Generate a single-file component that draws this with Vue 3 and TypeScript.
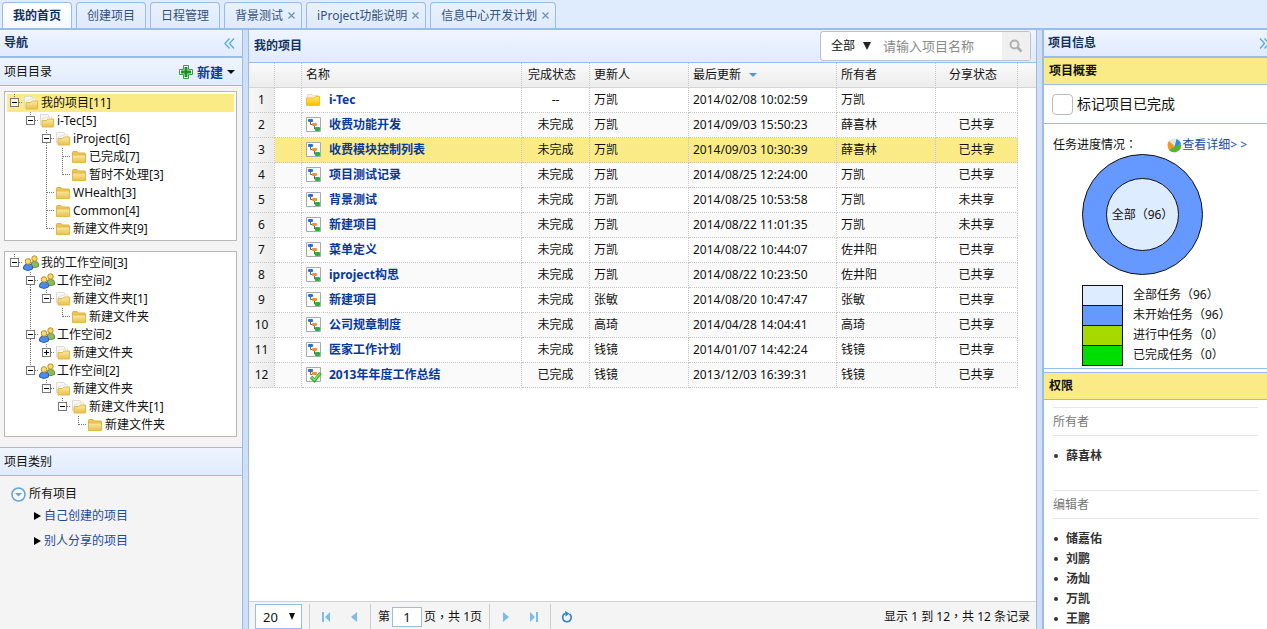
<script setup lang="ts">
import { computed, ref } from 'vue'

interface Tab { title: string; closable: boolean }
interface TreeNode { guides: string; icon: string; label: string }
interface Project { name: string; icon: string; state: string; updater: string; time: string; owner: string; share: string }

const tabs: Tab[] = [
  { title: '我的首页', closable: false },
  { title: '创建项目', closable: false },
  { title: '日程管理', closable: false },
  { title: '背景测试', closable: true },
  { title: 'iProject功能说明', closable: true },
  { title: '信息中心开发计划', closable: true },
]
const activeTab = ref(0)

// Guide characters: "." blank, "|" line, "T" branch, "L" last branch,
// "-" open node, "=" open node with siblings below, "+" closed node.
const projectTree: TreeNode[] = [
  { guides: '-', icon: 'folder-open', label: '我的项目[11]' },
  { guides: '.-', icon: 'folder-open', label: 'i-Tec[5]' },
  { guides: '..=', icon: 'folder-open', label: 'iProject[6]' },
  { guides: '..|T', icon: 'folder', label: '已完成[7]' },
  { guides: '..|L', icon: 'folder', label: '暂时不处理[3]' },
  { guides: '..T', icon: 'folder', label: 'WHealth[3]' },
  { guides: '..T', icon: 'folder', label: 'Common[4]' },
  { guides: '..L', icon: 'folder', label: '新建文件夹[9]' },
]
const workspaceTree: TreeNode[] = [
  { guides: '-', icon: 'people', label: '我的工作空间[3]' },
  { guides: '.=', icon: 'people', label: '工作空间2' },
  { guides: '.|-', icon: 'folder-open', label: '新建文件夹[1]' },
  { guides: '.|.L', icon: 'folder', label: '新建文件夹' },
  { guides: '.=', icon: 'people', label: '工作空间2' },
  { guides: '.|+', icon: 'folder-open', label: '新建文件夹' },
  { guides: '.-', icon: 'people', label: '工作空间[2]' },
  { guides: '..-', icon: 'folder-open', label: '新建文件夹' },
  { guides: '...-', icon: 'folder-open', label: '新建文件夹[1]' },
  { guides: '....L', icon: 'folder', label: '新建文件夹' },
]
const trees = [projectTree, workspaceTree]
const selectedNode = ref('0-0')

function guidePath(g: string): string {
  switch (g) {
    case '|': return 'M7.5 0V18'
    case 'T': return 'M7.5 0V18M8 8.5H16'
    case 'L': return 'M7.5 0V9M8 8.5H16'
    case '=': return 'M7.5 0V4M7.5 13V18M12 8.5H16'
    case '-':
    case '+': return 'M7.5 0V4M12 8.5H16'
    default: return ''
  }
}

const row = (name: string, state: string, updater: string, time: string, owner: string, share: string, icon = 'doc'): Project =>
  ({ name, icon, state, updater, time, owner, share })

const projects: Project[] = [
  row('i-Tec', '--', '万凯', '2014/02/08 10:02:59', '万凯', '', 'folder-bright'),
  row('收费功能开发', '未完成', '万凯', '2014/09/03 15:50:23', '薛喜林', '已共享'),
  row('收费模块控制列表', '未完成', '万凯', '2014/09/03 10:30:39', '薛喜林', '已共享'),
  row('项目测试记录', '未完成', '万凯', '2014/08/25 12:24:00', '万凯', '已共享'),
  row('背景测试', '未完成', '万凯', '2014/08/25 10:53:58', '万凯', '未共享'),
  row('新建项目', '未完成', '万凯', '2014/08/22 11:01:35', '万凯', '未共享'),
  row('菜单定义', '未完成', '万凯', '2014/08/22 10:44:07', '佐井阳', '已共享'),
  row('iproject构思', '未完成', '万凯', '2014/08/22 10:23:50', '佐井阳', '已共享'),
  row('新建项目', '未完成', '张敏', '2014/08/20 10:47:47', '张敏', '已共享'),
  row('公司规章制度', '未完成', '高琦', '2014/04/28 14:04:41', '高琦', '已共享'),
  row('医家工作计划', '未完成', '钱镜', '2014/01/07 14:42:24', '钱镜', '已共享'),
  row('2013年年度工作总结', '已完成', '钱镜', '2013/12/03 16:39:31', '钱镜', '已共享', 'doc-done'),
]
const selectedRow = ref(2)

const scope = ref('全部')
const keyword = ref('')
const pageSize = ref('20')
const page = ref('1')
const finished = ref(false)

const tasks = [
  { key: 'all', label: '全部任务', count: 96 },
  { key: 'todo', label: '未开始任务', count: 96 },
  { key: 'doing', label: '进行中任务', count: 0 },
  { key: 'done', label: '已完成任务', count: 0 },
]
const total = computed(() => tasks[0].count)
const editors = ['储嘉佑', '刘鹏', '汤灿', '万凯', '王鹏']
</script>

<template>
  <div class="app">
    <svg class="sprite" aria-hidden="true">
      <defs>
        <linearGradient id="g-gold" x1="0" y1="0" x2="0" y2="1">
          <stop offset="0" stop-color="#fbe9a0" /><stop offset="1" stop-color="#e9c04c" />
        </linearGradient>
        <linearGradient id="g-bright" x1="0" y1="0" x2="0" y2="1">
          <stop offset="0" stop-color="#ffe96a" /><stop offset="1" stop-color="#f9bd00" />
        </linearGradient>
        <symbol id="i-folder" viewBox="0 0 16 16">
          <path d="M1.5 13.5V3.5Q1.5 2.500 2.5 2.500H6L7.5 4H13.5Q14.5 4 14.5 5V13.5Z" fill="#ecc654" stroke="#dbb145" />
          <path d="M1.5 6H14.500V12.500Q14.500 13.500 13.500 13.500H2.500Q1.500 13.500 1.500 12.500Z" fill="url(#g-gold)" stroke="#e2ba4c" />
        </symbol>
        <symbol id="i-folder-open" viewBox="0 0 16 16">
          <path d="M1.500 12V1.500H9L10.500 4V12Z" fill="#f7f7f4" stroke="#dddcd4" />
          <path d="M3.500 13V5.500L12.500 3.500V13Z" fill="#fffefa" stroke="#e8e5d8" />
          <path d="M3 14V7.500H7.500L9 6H14.500V14Z" fill="url(#g-gold)" stroke="#e2ba4c" />
        </symbol>
        <symbol id="i-folder-bright" viewBox="0 0 16 16">
          <path d="M1 7V3.500Q1 2.500 2 2.500H6L7 3.500H12.500V7Z" fill="#f7f2dd" stroke="#e6dfc0" />
          <path d="M.5 13V6H8L9.500 4.500H13.500V13Q13.500 13.500 13 13.500H1Q.5 13.500 .5 13Z" fill="url(#g-bright)" stroke="#f5bf25" />
        </symbol>
        <symbol id="i-people" viewBox="0 0 16 16">
          <path d="M8 12V9Q8 6.500 11.500 6.500Q15.500 6.500 15.500 9V11.500Q12 13.500 8 12Z" fill="#8cba5c" stroke="#5d9238" />
          <circle cx="11.500" cy="3.500" r="2.700" fill="#fbd768" stroke="#bf8b22" />
          <path d="M.5 14V12Q1 9 5 9Q9.500 9 9.500 12V14Q5 17 .5 14Z" fill="#4c8ae8" stroke="#2a62bd" />
          <circle cx="5" cy="6.500" r="2.800" fill="#fcdc70" stroke="#bf8b22" />
        </symbol>
        <symbol id="i-doc" viewBox="0 0 16 16">
          <path d="M.5 .5H14.500V14.500H.5Z" fill="#fff" stroke="#a3aab0" />
          <path d="M4.500 5V7.500H6M8.500 9V12H10" fill="none" stroke="#567" />
          <rect x="2" y="2" width="5" height="3" rx="1" fill="#2d6fd0" />
          <rect x="6" y="6" width="5" height="3" rx="1" fill="#f09030" />
          <rect x="9" y="10" width="5" height="4" rx="1" fill="#2cae3e" />
        </symbol>
        <symbol id="i-doc-done" viewBox="0 0 16 16">
          <path d="M.5 .5H14.500V14.500H.5Z" fill="#fff" stroke="#a3aab0" />
          <path d="M4.500 5V7.500H6" fill="none" stroke="#567" />
          <rect x="2" y="2" width="5" height="3" rx="1" fill="#2d6fd0" />
          <rect x="6" y="5" width="5" height="3" rx="1" fill="#f09030" />
          <path d="M5 10L8.500 13.500L14.500 6" fill="none" stroke="#3aa93c" stroke-width="3.400" />
          <path d="M5.500 10.500L8.500 13L14 6.500" fill="none" stroke="#7fe063" stroke-width="1.600" />
        </symbol>
      </defs>
    </svg>

    <nav class="tabs">
      <div v-for="(tab, i) in tabs" :key="tab.title" class="tab" :class="{ active: i === activeTab }">
        <button class="tab-title" type="button" @click="activeTab = i">{{ tab.title }}</button>
        <button v-if="tab.closable" class="tab-close" type="button" :aria-label="'关闭' + tab.title">
          <svg width="7" height="7" viewBox="0 0 7 7"><path d="M.5 .5L6.500 6.500M6.500 .5L.5 6.500" stroke="#6f8fb8" stroke-width="1.200" /></svg>
        </button>
      </div>
    </nav>

    <div class="main">
      <aside class="left">
        <header class="bar bar-title">
          <h2>导航</h2>
          <button class="fold" type="button" aria-label="收起导航">
            <svg width="11" height="11" viewBox="0 0 11 11"><path d="M5.500 .5L1 5.500L5.500 10.500M10 .5L5.500 5.500L10 10.500" fill="none" stroke="#55ace2" stroke-width="1.300" /></svg>
          </button>
        </header>
        <div class="bar bar-tools">
          <span>项目目录</span>
          <button class="create" type="button">
            <svg width="14" height="14" viewBox="0 0 14 14"><path d="M4.500 .5H9.500V4.500H13.500V9.500H9.500V13.500H4.500V9.500H.5V4.500H4.500Z" fill="#fff" stroke="#3f9a45" /><path d="M5.500 2H8.500V5.500H12V8.500H8.500V12H5.500V8.500H2V5.500H5.500Z" fill="#159325" /></svg>
            新建
            <svg width="8" height="4" viewBox="0 0 8 4"><path d="M0 0H8L4 4Z" fill="#111" /></svg>
          </button>
        </div>
        <div class="trees">
          <ul v-for="(tree, t) in trees" :key="t" class="tree">
            <li v-for="(node, n) in tree" :key="n" :class="{ selected: selectedNode === t + '-' + n }" @click="selectedNode = t + '-' + n">
              <template v-for="(g, k) in node.guides.split('')" :key="k">
                <button v-if="'-=+'.includes(g)" class="guide" type="button" :aria-label="g === '+' ? '展开' : '折叠'">
                  <svg width="16" height="18" viewBox="0 0 16 18">
                    <path :d="guidePath(g)" stroke="#777" stroke-dasharray="1 1" fill="none" />
                    <rect x="3.500" y="4.500" width="8" height="8" fill="#fff" fill-opacity=".6" stroke="#777" />
                    <path :d="g === '+' ? 'M5 8.500H10M7.500 6V11' : 'M5 8.500H10'" stroke="#000" />
                  </svg>
                </button>
                <svg v-else class="guide" width="16" height="18" viewBox="0 0 16 18"><path :d="guidePath(g)" stroke="#777" stroke-dasharray="1 1" fill="none" /></svg>
              </template>
              <svg class="node-icon" width="16" height="16"><use :href="'#i-' + node.icon" /></svg>
              <span>{{ node.label }}</span>
            </li>
          </ul>
        </div>
        <div class="bar bar-kinds">项目类别</div>
        <div class="kinds">
          <div class="kinds-root">
            <svg width="15" height="15" viewBox="0 0 15 15"><circle cx="7.500" cy="7.500" r="6.500" fill="#f8fbff" stroke="#67a6d8" stroke-width="1.600" /><path d="M4 6H11L7.500 9.500Z" fill="#67a6d8" /></svg>
            所有项目
          </div>
          <ul>
            <li><svg width="7" height="8" viewBox="0 0 7 8"><path d="M0 0L7 4L0 8Z" /></svg><a href="#own">自己创建的项目</a></li>
            <li><svg width="7" height="8" viewBox="0 0 7 8"><path d="M0 0L7 4L0 8Z" /></svg><a href="#shared">别人分享的项目</a></li>
          </ul>
        </div>
      </aside>

      <main class="center">
        <header class="bar bar-center">
          <h2>我的项目</h2>
          <form class="search" @submit.prevent>
            <span class="pick">
              <select v-model="scope" aria-label="范围"><option>全部</option></select>
              <svg width="8" height="8" viewBox="0 0 8 8"><path d="M0 0H8L4 8Z" fill="#222" /></svg>
            </span>
            <input v-model="keyword" type="text" placeholder="请输入项目名称" aria-label="项目名称">
            <button type="submit" aria-label="搜索">
              <svg width="14" height="14" viewBox="0 0 14 14"><circle cx="5.500" cy="5.500" r="4" fill="none" stroke="#b0b0b0" stroke-width="2" /><path d="M8.500 8.500L12.500 12.500" stroke="#b0b0b0" stroke-width="2.600" /></svg>
            </button>
          </form>
        </header>
        <div class="grid">
          <table>
            <colgroup>
              <col class="c-no"><col class="c-flag"><col class="c-name"><col class="c-state"><col class="c-person"><col class="c-time"><col class="c-person"><col class="c-share"><col>
            </colgroup>
            <thead>
              <tr>
                <th></th><th></th><th>名称</th><th class="mid">完成状态</th><th>更新人</th>
                <th>最后更新<svg class="sort" width="8" height="4" viewBox="0 0 8 4"><path d="M0 0H8L4 4Z" fill="#5596d2" /></svg></th>
                <th>所有者</th><th class="mid">分享状态</th><th class="rest"></th>
              </tr>
            </thead>
            <tbody>
              <tr v-for="(p, i) in projects" :key="i" :class="{ picked: i === selectedRow }" @click="selectedRow = i">
                <td class="no">{{ i + 1 }}</td>
                <td></td>
                <td><a class="name" href="#project"><svg width="16" height="16"><use :href="'#i-' + p.icon" /></svg>{{ p.name }}</a></td>
                <td class="mid">{{ p.state }}</td>
                <td>{{ p.updater }}</td>
                <td>{{ p.time }}</td>
                <td>{{ p.owner }}</td>
                <td class="mid">{{ p.share }}</td>
                <td class="rest"></td>
              </tr>
            </tbody>
          </table>
        </div>
        <footer class="pager">
          <span class="pick size">
            <select v-model="pageSize" aria-label="每页条数"><option>20</option></select>
            <svg width="6" height="7" viewBox="0 0 6 7"><path d="M0 0H6L3 7Z" fill="#111" /></svg>
          </span>
          <i class="sep"></i>
          <button type="button" aria-label="首页"><svg width="10" height="10" viewBox="0 0 10 10"><path d="M1 0H3V10H1ZM9 0V10L4 5Z" fill="#7cbce8" /></svg></button>
          <button type="button" aria-label="上一页"><svg width="10" height="10" viewBox="0 0 10 10"><path d="M8 0V10L2 5Z" fill="#7cbce8" /></svg></button>
          <i class="sep"></i>
          <label class="goto">第<input v-model="page" type="text">页<span class="punct">，</span>共 1页</label>
          <i class="sep"></i>
          <button type="button" aria-label="下一页"><svg width="10" height="10" viewBox="0 0 10 10"><path d="M2 0V10L8 5Z" fill="#7cbce8" /></svg></button>
          <button type="button" aria-label="末页"><svg width="10" height="10" viewBox="0 0 10 10"><path d="M1 0L6 5L1 10ZM7 0H9V10H7Z" fill="#7cbce8" /></svg></button>
          <i class="sep"></i>
          <button type="button" aria-label="刷新"><svg width="12" height="12" viewBox="0 0 12 12"><path d="M8.500 3A4.300 4.300 0 1 1 4 2.600" fill="none" stroke="#2d86cc" stroke-width="1.700" /><path d="M4 0L8.500 2.500L4.500 5.500Z" fill="#2d86cc" /></svg></button>
          <span class="count">显示 1 到 12<span class="punct">，</span>共 12 条记录</span>
        </footer>
      </main>

      <aside class="right">
        <header class="bar bar-title">
          <h2>项目信息</h2>
          <button class="fold" type="button" aria-label="收起项目信息">
            <svg width="11" height="11" viewBox="0 0 11 11"><path d="M1 .5L5.500 5.500L1 10.500M5.500 .5L10 5.500L5.500 10.500" fill="none" stroke="#55ace2" stroke-width="1.300" /></svg>
          </button>
        </header>
        <h3>项目概要</h3>
        <label class="finish"><input v-model="finished" type="checkbox">标记项目已完成</label>
        <section class="progress">
          <div class="progress-head">
            <span>任务进度情况<span class="punct">：</span></span>
            <a href="#detail">
              <svg width="15" height="15" viewBox="0 0 15 15"><circle cx="7.500" cy="7.500" r="7" fill="#e7e7e2" /><path d="M7.500 8L2 3A7 7 0 0 0 3 12.500Z" fill="#f39a1d" /><path d="M7.500 8.500L14 6A7 7 0 0 1 2 12Z" fill="#55b52e" /><path d="M7.500 9L9.500 1A7 7 0 0 1 14 6Z" fill="#2c8fd8" /></svg>
              查看详细&gt; &gt;
            </a>
          </div>
          <div class="donut"><div class="hole">全部（{{ total }}）</div></div>
          <ul class="legend">
            <li v-for="t in tasks" :key="t.key"><i :class="t.key"></i>{{ t.label }}（{{ t.count }}）</li>
          </ul>
        </section>
        <h3 class="second">权限</h3>
        <section class="members">
          <h4>所有者</h4>
          <ul><li>薛喜林</li></ul>
          <h4>编辑者</h4>
          <ul><li v-for="e in editors" :key="e">{{ e }}</li></ul>
        </section>
      </aside>
    </div>
  </div>
</template>

<style>
html, body { margin: 0; overflow: hidden; }
</style>

<style scoped>
.app {
  height: 100vh;
  display: flex;
  flex-direction: column;
  overflow: hidden;
  background: #dfecfd;
  color: #111;
  font: 12px/18px "Noto Sans", "Noto Sans CJK SC", sans-serif;
}
.app *, .app *::before { box-sizing: border-box; }
.sprite { position: absolute; width: 0; height: 0; }
button, input, select { font: inherit; color: inherit; margin: 0; padding: 0; border: 0; background: none; border-radius: 0; outline: 0; }
button { cursor: pointer; }
svg { display: block; flex: none; }
ul { list-style: none; margin: 0; padding: 0; }
h2, h3, h4 { margin: 0; font-size: 12px; }
a { color: #1c4aa0; text-decoration: none; }
.punct { font-family: "Noto Sans CJK TC", sans-serif; line-height: 1; }

.tabs { display: flex; flex: none; align-items: flex-end; gap: 4px; height: 30px; padding: 2px 2px 0; border-bottom: 2px solid #99bce8; }
.tab {
  display: flex; align-items: center; height: 26px; padding: 0 10px; white-space: nowrap;
  border: 1px solid #99bce8; border-bottom: 0; border-radius: 4px 4px 0 0;
  background: linear-gradient(#e9f1fd, #deebfb); color: #33507c;
}
.tab.active { background: linear-gradient(#fff, #f4f9ff); color: #0f2f66; font-weight: bold; }
.tab:has(.tab-close) { padding-right: 6px; }
.tab-close { margin-left: 5px; }

.main { flex: 1; min-height: 0; display: grid; grid-template-columns: 243px minmax(0, 1fr) 225px; column-gap: 5px; background: #d0dff3; }
.bar { display: flex; flex: none; align-items: center; justify-content: space-between; padding: 0 4px; background: linear-gradient(#eff5ff, #e0ebfc); border-bottom: 1px solid #99bce8; }
.bar h2 { color: #15315f; }
.bar-title { height: 28px; border-bottom-width: 2px; }
.bar-tools { height: 28px; }
.bar-kinds { height: 29px; border-top: 1px solid #99bce8; }
.fold { padding: 0 3px; }

.left { display: flex; flex-direction: column; min-height: 0; border-right: 1px solid #99bce8; background: #f4f4f4; }
.create { display: flex; align-items: center; gap: 4px; padding-right: 3px; font-size: 13px; font-weight: bold; color: #0d3c9c; }
.trees { display: flex; flex-direction: column; gap: 10px; padding: 5px 5px 10px 4px; }
.tree { padding: 2px; border: 1px solid #b5b8bb; background: #fff; }
.tree li { display: flex; align-items: center; height: 18px; white-space: nowrap; cursor: default; }
.tree li.selected { background: #faeb87; }
.guide { width: 16px; height: 18px; flex: none; }
.node-icon { margin-right: 2px; }
.kinds { padding: 9px 11px; }
.kinds-root { display: flex; align-items: center; gap: 3px; }
.kinds ul { padding: 0 0 0 23px; }
.kinds li { display: flex; align-items: center; gap: 3px; height: 25px; }

.center { display: flex; flex-direction: column; min-width: 0; min-height: 0; border: 1px solid #99bce8; border-width: 0 1px; background: #fff; }
.bar-center { height: 33px; padding: 0 5px; }
.search { display: flex; height: 30px; width: 211px; overflow: hidden; border: 1px solid #b9c3d1; border-radius: 3px; background: #fff; }
.pick { display: flex; align-items: center; }
.pick select { appearance: none; }
.pick svg { pointer-events: none; }
.search .pick { padding-left: 10px; gap: 7px; }
.search .pick select { width: 25px; }
.search input { flex: 1; min-width: 0; padding-left: 12px; font-size: 13px; }
.search input::placeholder { color: #8a8a8a; opacity: 1; }
.search button { display: flex; align-items: center; justify-content: center; width: 28px; background: #f0f0f0; }
.grid { flex: 1; min-height: 0; overflow: hidden; }
table { width: 100%; table-layout: fixed; border-collapse: separate; border-spacing: 0; }
.c-no { width: 26px; }
.c-flag { width: 27px; }
.c-name { width: 220px; }
.c-state { width: 68px; }
.c-person { width: 99px; }
.c-time { width: 148px; }
.c-share { width: 82px; }
th, td { height: 25px; padding: 0 4px; text-align: left; font-weight: normal; white-space: nowrap; border-right: 1px dotted #c6c6c6; border-bottom: 1px dotted #c6c6c6; }
th { background: linear-gradient(#fafafa, #ececec); border-bottom: 1px solid #d5d5d5; }
td.mid { text-align: center; }
th.mid { text-align: center; padding-right: 11px; }
.sort { display: inline-block; margin-left: 8px; vertical-align: 2px; }
tbody tr:nth-child(even) { background: #fafafa; }
tbody tr.picked { background: #faeb87; }
td.no { padding: 0; text-align: center; background: linear-gradient(90deg, #f7f7f7, #ececec); }
th.rest, td.rest { border-right: 0; }
td.rest { border-bottom: 0; background: #fff; }
.name { display: flex; align-items: center; gap: 7px; font-weight: bold; color: #08389a; }

.pager { display: flex; flex: none; align-items: center; height: 28px; padding: 2px 6px 0; border-top: 1px solid #d0d0d0; background: #f4f4f4; white-space: nowrap; }
.pager button { display: flex; align-items: center; justify-content: center; width: 28px; height: 24px; }
.size { width: 47px; height: 25px; justify-content: space-between; padding: 0 6px 0 7px; border: 1px solid #99bce8; background: #fff; font-size: 13px; }
.size select { width: 20px; }
.sep { width: 1px; height: 25px; background: #ccc; margin: 0 2px; }
.size + .sep { margin-left: 7px; }
.goto { display: flex; align-items: center; padding: 0 5px; white-space: pre; }
.goto input { width: 30px; height: 20px; margin: 0 2px; border: 1px solid #99bce8; background: #fff; text-align: center; font-size: 13px; }
.count { margin-left: auto; }

.right { min-width: 0; min-height: 0; overflow: hidden; border-left: 2px solid #99bce8; background: #fff; }
.right .fold { padding: 0; margin-right: -7px; }
h3 { height: 27px; padding: 0 5px; line-height: 26px; background: #faeb87; border-bottom: 1px solid #99bce8; }
h3.second { margin-top: 3px; height: 28px; border-top: 1px solid #99bce8; }
.finish { display: flex; align-items: center; gap: 4px; height: 39px; padding-left: 8px; font-size: 14px; border-bottom: 1px solid #99bce8; }
.finish input { appearance: none; width: 21px; height: 21px; border: 1px solid #bbb; border-radius: 4px; background: #fff; }
.finish input:checked { background: #7cbce8; }
.progress { padding: 12px 0 3px; border-bottom: 1px solid #99bce8; }
.progress-head { display: flex; justify-content: space-between; padding: 0 20px 0 9px; white-space: nowrap; }
.progress-head a { display: flex; align-items: center; }
.donut { display: grid; place-items: center; width: 121px; height: 121px; margin: 0 0 10px 38px; border: 1px solid #111; border-radius: 50%; background: #6699ff; }
.hole { display: grid; place-items: center; width: 73px; height: 73px; border: 1px solid #111; border-radius: 50%; background: #deecff; white-space: nowrap; }
.legend { padding-left: 38px; }
.legend li { display: flex; align-items: center; gap: 10px; height: 20px; white-space: nowrap; }
.legend i { width: 41px; height: 21px; border: 1px solid #111; }
.all { background: #deecff; }
.todo { background: #6699ff; }
.doing { background: #a6d900; }
.done { background: #00dd00; }
.members { padding: 7px 9px; }
.members h4 { height: 29px; line-height: 27px; font-weight: normal; color: #777; border: 1px solid #e6e6e6; border-width: 1px 0; }
.members ul { padding: 10px 0 24px; }
.members li { display: flex; align-items: center; gap: 8px; height: 20px; padding-left: 1px; font-weight: bold; color: #333; }
.members li::before { content: ""; width: 4px; height: 4px; border-radius: 50%; background: #333; }
</style>
